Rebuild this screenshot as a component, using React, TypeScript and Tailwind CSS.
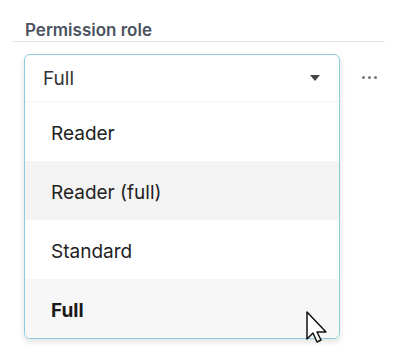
import React from 'react';

const options = ['Reader', 'Reader (full)', 'Standard', 'Full'];

const App: React.FC = () => {
  const selected = 'Full';
  const hovered = 'Reader (full)';

  return (
    <div className="w-[400px] h-[363px] bg-white font-['Inter',sans-serif] relative overflow-hidden">
      <div className="pt-[19px] pl-[12px] pr-[15px]">
        <h3 className="pl-[13px] text-[17px] leading-[22px] font-semibold text-[#4b5360]">Permission role</h3>
        <div className="h-px bg-[#e6e6e6]" />
      </div>

      <div className="flex items-start pl-[24px] mt-[12px]">
        {/* Open select */}
        <div className="w-[316px] rounded-[6px] border border-[#8fcbe0] bg-white shadow-[0_3px_6px_rgba(0,0,0,0.12)] overflow-hidden">
          <div className="h-[47px] flex items-center justify-between pl-[18px] pr-[19px] border-b border-dotted border-[#ececec]">
            <span className="pt-[3px] text-[19px] text-[#333]">Full</span>
            <svg width="10" height="6" viewBox="0 0 10 6">
              <path d="M0 0h10L5 6z" fill="#444" />
            </svg>
          </div>
          {options.map(opt => (
            <div
              key={opt}
              className={`h-[59px] flex items-center pl-[26px] pt-[5px] text-[19px] ${
                opt === hovered ? 'bg-[#f3f3f3]' : opt === selected ? 'bg-[#f7f7f7]' : 'bg-white'
              } ${opt === selected ? 'font-bold text-[#1a1a1a]' : 'text-[#222]'}`}
            >
              {opt}
            </div>
          ))}
        </div>

        {/* More actions */}
        <div className="ml-[22px] h-[47px] flex items-center gap-[3.5px]">
          <span className="w-[2.5px] h-[2.5px] rounded-full bg-[#777]" />
          <span className="w-[2.5px] h-[2.5px] rounded-full bg-[#777]" />
          <span className="w-[2.5px] h-[2.5px] rounded-full bg-[#777]" />
        </div>
      </div>

      {/* Mouse cursor */}
      <svg className="absolute left-[306px] top-[311px]" width="24" height="36" viewBox="0 0 24 36">
        <path
          d="M1 1 L1 28 L7 22 L11 31 L15 29 L11 21 L20 21 Z"
          fill="#fff"
          stroke="#111"
          strokeWidth="1.5"
          strokeLinejoin="round"
        />
      </svg>
    </div>
  );
};

export default App;
